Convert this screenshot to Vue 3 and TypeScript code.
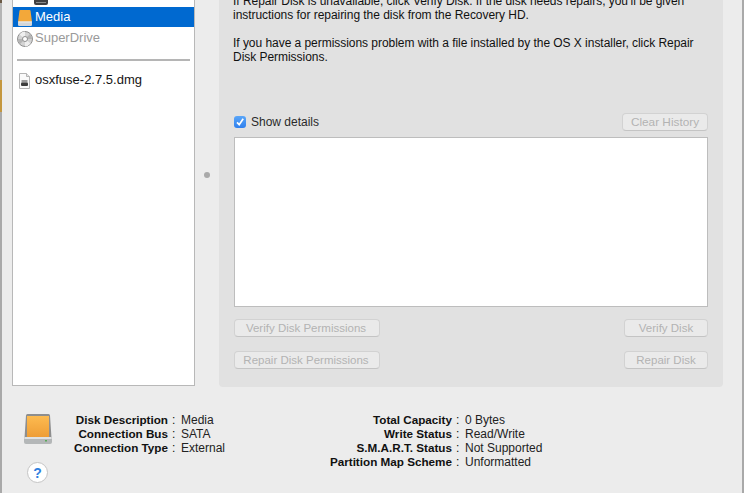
<script setup lang="ts">
const leftInfo = [
  ['Disk Description', 'Media'],
  ['Connection Bus', 'SATA'],
  ['Connection Type', 'External'],
]
const rightInfo = [
  ['Total Capacity', '0 Bytes'],
  ['Write Status', 'Read/Write'],
  ['S.M.A.R.T. Status', 'Not Supported'],
  ['Partition Map Scheme', 'Unformatted'],
]
</script>

<template>
  <div class="screen">
    <div class="edge left-edge">
      <i class="seg dark"></i>
      <i class="seg gray"></i>
      <i class="seg orange"></i>
      <i class="seg rest"></i>
    </div>
    <div class="window">
      <div class="main">
        <aside class="sidebar">
          <div class="clipped-icon">
            <svg width="14" height="5" viewBox="0 0 14 5"><path d="M0 0h14v3a2 2 0 0 1-2 2H2a2 2 0 0 1-2-2z" fill="#3f3f41" /><rect x="2" y="2" width="10" height="1" fill="#8a8a8a" /></svg>
          </div>
          <div class="row selected">
            <svg class="icon" width="18" height="20" viewBox="0 0 18 20">
              <path d="M2.500 3.500a1 1 0 0 1 1-.5h9a1 1 0 0 1 1 .5L15 15H1z" fill="#f3a83a" />
              <rect x="1" y="14.500" width="14" height="4.500" rx="1.200" fill="#d3d6d8" />
              <rect x="1" y="14.500" width="14" height="1" fill="#eceeef" />
            </svg>
            <span>Media</span>
          </div>
          <div class="row muted">
            <svg class="icon" width="18" height="20" viewBox="0 0 18 20">
              <circle cx="8" cy="11" r="7.500" fill="#d4d4d4" stroke="#8f8f8f" />
              <path d="M8 11L2.500 6.500A7.500 7.500 0 0 1 8 3.500zM8 11l5.500 4.500A7.500 7.500 0 0 1 8 18.500z" fill="#efefef" />
              <path d="M8 11L3 16A7.500 7.500 0 0 1 .8 11zM8 11l5-5a7.500 7.500 0 0 1 2.200 5z" fill="#b5b5b5" />
              <circle cx="8" cy="11" r="2.500" fill="#fff" stroke="#8f8f8f" />
            </svg>
            <span>SuperDrive</span>
          </div>
          <hr class="divider" />
          <div class="row file">
            <svg class="icon" width="18" height="20" viewBox="0 0 18 20">
              <path d="M2.500 3.500h7l3 3v12h-10z" fill="#fafafa" stroke="#b4b4b4" />
              <path d="M9.500 3.500v3h3" fill="#e4e4e4" stroke="#b4b4b4" />
              <rect x="4.500" y="10" width="6" height="2.500" fill="#9a9a9a" />
              <rect x="4" y="12.500" width="7" height="3.500" rx="1" fill="#3c3c3c" />
            </svg>
            <span>osxfuse-2.7.5.dmg</span>
          </div>
        </aside>
        <div class="grip"><i></i></div>
        <section class="panel">
          <div class="copy">
            <p>If Repair Disk is unavailable, click Verify Disk. If the disk needs repairs, you’ll be given<br />instructions for repairing the disk from the Recovery HD.</p>
            <p>If you have a permissions problem with a file installed by the OS X installer, click Repair<br />Disk Permissions.</p>
          </div>
          <div class="details-bar">
            <label class="check"><span class="box"><svg width="10" height="10" viewBox="0 0 10 10"><path d="M2 5.400l2.200 2.300L8.200 1.800" fill="none" stroke="#fff" stroke-width="1.700" /></svg></span>Show details</label>
            <button class="btn clear" disabled>Clear History</button>
          </div>
          <div class="log"></div>
          <div class="actions">
            <button class="btn wide" disabled>Verify Disk Permissions</button>
            <button class="btn narrow" disabled>Verify Disk</button>
          </div>
          <div class="actions second">
            <button class="btn wide" disabled>Repair Disk Permissions</button>
            <button class="btn narrow" disabled>Repair Disk</button>
          </div>
        </section>
      </div>
      <footer class="footer">
        <div class="icons">
          <svg width="28" height="30" viewBox="0 0 28 30">
            <defs><linearGradient id="orange" x1="0" y1="0" x2="0" y2="1"><stop offset="0" stop-color="#fdbb50" /><stop offset="1" stop-color="#ee9d36" /></linearGradient></defs>
            <path d="M2 1.500A1.500 1.500 0 0 1 3.500 0h21A1.500 1.500 0 0 1 26 1.500L27.500 24H.5z" fill="#8e8e8e" />
            <rect x="3" y="2" width="22" height="21" fill="url(#orange)" />
            <rect x="0" y="23" width="28" height="7" rx="2" fill="#b4b7b8" />
            <rect x="0.500" y="23" width="27" height="2" fill="#dfe1e2" />
            <rect x="21" y="26" width="2" height="1.500" fill="#5aa85a" />
          </svg>
          <button class="help">?</button>
        </div>
        <dl class="info first">
          <template v-for="item in leftInfo" :key="item[0]"><dt>{{ item[0] }}</dt><span class="colon">:</span><dd>{{ item[1] }}</dd></template>
        </dl>
        <dl class="info second-info">
          <template v-for="item in rightInfo" :key="item[0]"><dt>{{ item[0] }}</dt><span class="colon">:</span><dd>{{ item[1] }}</dd></template>
        </dl>
      </footer>
    </div>
    <div class="edge right-edge"></div>
  </div>
</template>

<style>
html, body { margin: 0; background: #ececec; overflow: hidden; }
</style>

<style scoped>
.screen { width: 744px; height: 493px; display: flex; overflow: hidden; background: #ececec; }
.edge { width: 2px; flex: none; display: flex; flex-direction: column; background: #a9a9a9; }
.seg { display: block; }
.seg.dark { height: 3px; background: #6b5a45; }
.seg.gray { height: 77px; background: #b4b4b4; }
.seg.orange { height: 32px; background: #c4973f; }
.seg.rest { flex: 1; background: #a9a9a9; }
.window { width: 740px; flex: none; box-sizing: border-box; padding-left: 10px; font: 12px/14px "Liberation Sans", Arial, sans-serif; color: #111; display: flex; flex-direction: column; }
.main { display: flex; height: 387px; flex: none; }
.sidebar { width: 183px; height: 386px; box-sizing: border-box; background: #fff; border: 1px solid #b8b8b8; border-top: 0; flex: none; display: flex; flex-direction: column; }
.clipped-icon { height: 7px; padding-left: 21px; box-sizing: border-box; }
.clipped-icon svg { display: block; }
.row { height: 20px; flex: none; display: flex; align-items: center; padding-left: 4px; font-size: 13px; }
.selected { background: #0069d0; color: #fff; }
.muted { color: #9a9a9a; margin-top: 1px; }
.file { color: #151515; }
.icon { flex: none; }
.divider { border: 0; height: 2px; flex: none; background: #b5b5b5; margin: 11px 4px 9px; }
.grip { width: 24px; flex: none; display: flex; align-items: center; justify-content: center; padding-bottom: 37px; box-sizing: border-box; }
.grip i { width: 6px; height: 6px; border-radius: 50%; background: #a9a9a9; display: block; }
.panel { width: 504px; height: 387px; box-sizing: border-box; flex: none; background: #e1e1e1; border-radius: 0 0 4px 4px; padding: 0 15px; }
.copy { height: 113px; margin-left: -1px; font-size: 12px; line-height: 14px; letter-spacing: -0.04px; overflow: hidden; }
.copy p { margin: 0 0 14px; white-space: nowrap; }
.copy p:first-child { margin-top: -6px; }
.details-bar { display: flex; justify-content: space-between; align-items: center; height: 17px; }
.check { display: flex; align-items: center; gap: 5px; font-size: 12px; color: #2a2a2a; padding-top: 1px; }
.box { width: 12px; height: 12px; border-radius: 3px; background: linear-gradient(#5aa6f8, #2f80ee); display: flex; align-items: center; justify-content: center; }
.btn { font: 11.500px/14px "Liberation Sans", Arial, sans-serif; color: #b3b3b3; background: #eaeaea; border: 1px solid #d2d2d2; border-bottom-color: #c4c4c4; border-radius: 4px; height: 18px; padding: 0 0 0 0; box-sizing: border-box; width: 84px; }
.clear { width: 86px; font-size: 11.800px; }
.log { height: 170px; box-sizing: border-box; background: #fff; border: 1px solid #bdbdbd; margin-top: 7px; }
.actions { display: flex; justify-content: space-between; margin-top: 12px; }
.actions.second { margin-top: 14px; }
.wide { width: 146px; padding-right: 2px; }
.footer { flex: 1; display: flex; }
.icons { width: 52px; flex: none; display: flex; flex-direction: column; align-items: flex-start; padding: 27px 0 0 12px; box-sizing: border-box; }
.icons svg { display: block; }
.help { width: 21px; height: 21px; margin: 18px 0 0 3px; padding: 0; border: 1px solid #c5c5c5; border-radius: 50%; background: #fff; color: #2f7fe0; font: bold 14px/18px "Liberation Sans", Arial, sans-serif; }
.info { display: grid; grid-auto-rows: 14px; margin: 26px 0 0; align-content: start; flex: none; }
.info dt { font-weight: bold; font-size: 11.700px; text-align: right; white-space: nowrap; color: #111; }
.colon { font-size: 12px; padding-left: 4px; }
.info dd { margin: 0; font-size: 12px; white-space: nowrap; color: #222; }
.first { width: 258px; grid-template-columns: 104px 13px 1fr; }
.second-info { grid-template-columns: 130px 13px auto; }
</style>
